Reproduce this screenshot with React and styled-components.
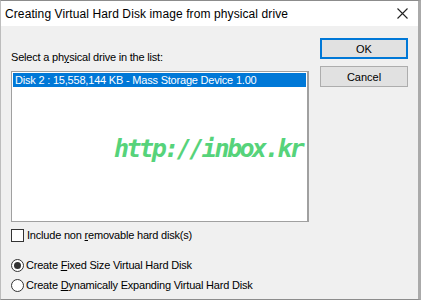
import React from "react";
import styled, { createGlobalStyle } from "styled-components";

const GlobalStyle = createGlobalStyle`
  html, body {
    margin: 0;
    padding: 0;
    background: #ffffff;
  }
  body {
    font-family: "Liberation Sans", Arial, sans-serif;
    font-size: 11px;
    letter-spacing: -0.2px;
    color: #000;
  }
`;

const Window = styled.div`
  position: relative;
  width: 421px;
  height: 300px;
  box-sizing: border-box;
  border-top: 1px solid #8c8c8c;
  border-left: 1px solid #bdbdbd;
  border-right: 3px solid #aaaaaa;
  border-bottom: 1px solid #8c8c8c;
  background: #f0f0f0;
  display: flex;
  flex-direction: column;
  overflow: hidden;
`;

const TitleBar = styled.div`
  height: 25px;
  background: #ffffff;
  display: flex;
  align-items: center;
  justify-content: space-between;
  padding: 0 8px 0 4px;
`;

const Title = styled.span`
  font-size: 12px;
  letter-spacing: 0.1px;
  white-space: nowrap;
`;

const CloseIcon = styled.svg`
  width: 11px;
  height: 11px;
  margin-right: 2px;
`;

const Body = styled.div`
  flex: 1;
  display: flex;
  padding: 12px 10px 0 10px;
  gap: 11px;
`;

const Main = styled.div`
  width: 298px;
  display: flex;
  flex-direction: column;
`;

const Label = styled.div`
  margin-top: 11px;
  height: 17px;
  line-height: 17px;
  white-space: nowrap;
`;

const ListBox = styled.div`
  position: relative;
  box-sizing: border-box;
  margin-top: 5px;
  height: 151px;
  background: #ffffff;
  border: 1px solid #a0a0a0;
  border-right-width: 2px;
  padding: 1px;
`;

const ListItem = styled.div`
  height: 14px;
  line-height: 14px;
  padding: 0 2px;
  white-space: nowrap;
  background: ${(p) => (p.$selected ? "#0078d7" : "transparent")};
  color: ${(p) => (p.$selected ? "#ffffff" : "#000000")};
`;

const Watermark = styled.div`
  position: absolute;
  left: 102px;
  top: 62px;
  font-family: "DejaVu Sans Mono", monospace;
  font-style: italic;
  font-weight: bold;
  font-size: 25px;
  letter-spacing: -2.5px;
  color: #56d37a;
  white-space: nowrap;
`;

const CheckRow = styled.label`
  display: flex;
  align-items: center;
  gap: 2px;
  margin-top: 6px;
  height: 14px;
  white-space: nowrap;
`;

const CheckBox = styled.span`
  width: 11px;
  height: 11px;
  border: 1px solid #333333;
  background: #ffffff;
  margin-right: 1px;
`;

const RadioGroup = styled.div`
  display: flex;
  flex-direction: column;
  gap: 6px;
  margin-top: 16px;
`;

const RadioRow = styled.label`
  display: flex;
  align-items: center;
  gap: 2px;
  height: 14px;
  white-space: nowrap;
`;

const Radio = styled.span`
  box-sizing: border-box;
  width: 13px;
  height: 13px;
  border-radius: 50%;
  border: 1px solid #333333;
  background: #ffffff;
  display: flex;
  align-items: center;
  justify-content: center;
  &::after {
    content: "";
    width: 7px;
    height: 7px;
    border-radius: 50%;
    background: ${(p) => (p.$checked ? "#333333" : "transparent")};
  }
`;

const Caption = styled.span`
  white-space: nowrap;
`;

const Buttons = styled.div`
  display: flex;
  flex-direction: column;
  gap: 7px;
`;

const Button = styled.button`
  width: 88px;
  height: 21px;
  box-sizing: border-box;
  font-family: inherit;
  font-size: 11px;
  background: #e1e1e1;
  border: ${(p) => (p.$default ? "2px solid #0078d7" : "1px solid #adadad")};
  padding: 0;
  color: #000;
`;

export default function App() {
  return (
    <>
      <GlobalStyle />
      <Window>
        <TitleBar>
          <Title>Creating Virtual Hard Disk image from physical drive</Title>
          <CloseIcon viewBox="0 0 11 11">
            <path d="M0.5 0.5 L10.5 10.5 M10.5 0.5 L0.5 10.5" stroke="#222" strokeWidth="1.1" fill="none" />
          </CloseIcon>
        </TitleBar>
        <Body>
          <Main>
            <Label>
              Select a ph<u>y</u>sical drive in the list:
            </Label>
            <ListBox>
              <ListItem $selected>Disk 2 : 15,558,144 KB - Mass Storage Device 1.00</ListItem>
              <Watermark>http://inbox.kr</Watermark>
            </ListBox>
            <CheckRow>
              <CheckBox />
              <Caption>
                Include non <u>r</u>emovable hard disk(s)
              </Caption>
            </CheckRow>
            <RadioGroup>
              <RadioRow>
                <Radio $checked />
                <Caption>
                  Create <u>F</u>ixed Size Virtual Hard Disk
                </Caption>
              </RadioRow>
              <RadioRow>
                <Radio />
                <Caption>
                  Create <u>D</u>ynamically Expanding Virtual Hard Disk
                </Caption>
              </RadioRow>
            </RadioGroup>
          </Main>
          <Buttons>
            <Button $default>OK</Button>
            <Button>Cancel</Button>
          </Buttons>
        </Body>
      </Window>
    </>
  );
}
